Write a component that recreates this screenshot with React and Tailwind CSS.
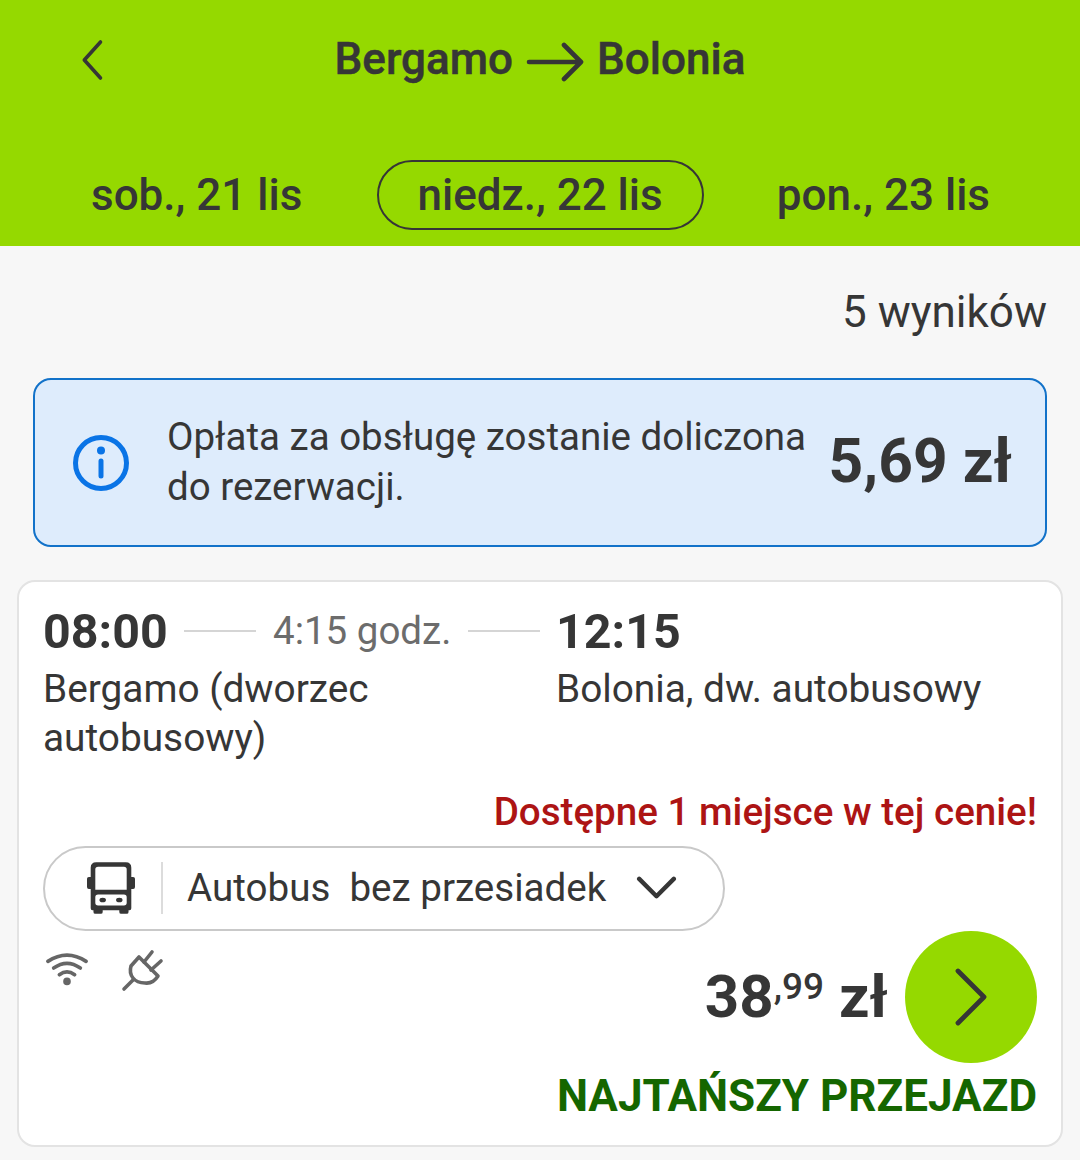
const dark = 'text-[#363636]';

function ChevronIcon({ d, className }) {
  return (
    <svg viewBox="0 0 40 48" fill="none" stroke="currentColor" strokeLinecap="round" strokeLinejoin="round" className={className}>
      <path d={d} />
    </svg>
  );
}

function Header() {
  return (
    <div className={`h-[246px] bg-[#95d900] ${dark} relative`}>
      <div className="absolute left-[78px] top-[36px] w-[36px] h-[48px]">
        <ChevronIcon d="M25 4 L7 24 L25 44" className="w-full h-full stroke-[4]" />
      </div>
      <div className="flex justify-center items-center h-[118px] text-[44px] font-medium leading-none [-webkit-text-stroke:0.5px_#363636]">
        <span>Bergamo</span>
        <svg viewBox="0 0 58 40" fill="none" stroke="currentColor" strokeLinecap="round" strokeLinejoin="round" className="w-[58px] h-[40px] mx-[13px] mt-[6px] stroke-[4.6]">
          <path d="M3 20 H54 M38 3 L55 20 L38 37" />
        </svg>
        <span>Bolonia</span>
      </div>
      <div className="flex items-center justify-between text-[44px] font-medium leading-none pl-[91px] pr-[90px] mt-[42px]">
        <span>sob., 21 lis</span>
        <span className="w-[327px] h-[70px] ml-[1px] flex items-center justify-center rounded-[35px] border-2 border-[#363636]">niedz., 22 lis</span>
        <span>pon., 23 lis</span>
      </div>
    </div>
  );
}

function InfoBox() {
  return (
    <div className="mx-[33px] mt-[44px] h-[169px] rounded-[18px] border-2 border-[#1272c9] bg-[#deecfc] flex items-center">
      <svg viewBox="0 0 56 56" fill="none" className="ml-[38px] w-[56px] h-[56px] shrink-0">
        <circle cx="28" cy="28" r="25.5" stroke="#0a74e6" strokeWidth="5" />
        <circle cx="28" cy="15.5" r="4" fill="#0a74e6" />
        <path d="M28 26 V41" stroke="#0a74e6" strokeWidth="5" strokeLinecap="round" />
      </svg>
      <p className={`ml-[38px] w-[650px] text-[38.5px] leading-[50px] mb-[2px] ${dark}`}>
        Opłata za obsługę zostanie doliczona do rezerwacji.
      </p>
      <span className={`ml-auto mr-[33px] text-[60.5px] font-bold leading-none ${dark}`}>5,69 zł</span>
    </div>
  );
}

function BusIcon() {
  return (
    <svg viewBox="0 0 52 58" className="w-[48px] h-[56px]">
      <path
        fillRule="evenodd"
        fill="#363636"
        d="M10 1 H42 Q48 1 48 7 V17 H50 Q52 17 52 19 V28 Q52 30 50 30 H48 V51 Q48 53 46 53 H45 V55 Q45 57 43 57 H37 Q35 57 35 55 V53 H17 V55 Q17 57 15 57 H9 Q7 57 7 55 V53 H6 Q4 53 4 51 V30 H2 Q0 30 0 28 V19 Q0 17 2 17 H4 V7 Q4 1 10 1 Z M12 6 Q9 6 9 9 V31 H43 V9 Q43 6 40 6 Z M12 36 Q9 36 9 39 V45 Q9 48 12 48 H40 Q43 48 43 45 V39 Q43 36 40 36 Z"
      />
      <ellipse cx="17" cy="42" rx="3.5" ry="2.5" fill="#363636" />
      <ellipse cx="35" cy="42" rx="3.5" ry="2.5" fill="#363636" />
    </svg>
  );
}

function AmenityIcons() {
  return (
    <div className="flex items-start gap-[33px] pt-[20px] pl-[3px]">
      <svg viewBox="0 0 44 36" fill="none" stroke="#666666" strokeWidth="3.8" strokeLinecap="round" className="w-[42px] h-[36px]">
        <path d="M2 10 Q22 -3 42 10" />
        <path d="M8 17 Q22 7 36 17" />
        <path d="M14 24 Q22 18 30 24" />
        <circle cx="22" cy="31" r="3" fill="#666666" strokeWidth="2" />
      </svg>
      <svg viewBox="0 0 44 44" fill="none" stroke="#666666" strokeWidth="3.6" strokeLinecap="round" strokeLinejoin="round" className="w-[44px] h-[44px] -mt-[3px]">
        <path d="M3 41 L12 32" />
        <path d="M18 9 L37 28 Q32 36 24 35 Q16 35 12 30 Q8 25 10 18 Z" />
        <path d="M23 14 L31 4 M30 22 L40 13" />
      </svg>
    </div>
  );
}

function ResultCard() {
  return (
    <div className="mx-[17px] mt-[33px] h-[567px] rounded-[18px] border-2 border-[#e3e3e3] bg-white px-[24px] pt-[22px] relative">
      <div className={`grid grid-cols-[513px_1fr] ${dark}`}>
        <div>
          <div className="flex items-center h-[56px]">
            <span className="text-[48.4px] font-bold leading-none w-[141px]">08:00</span>
            <span className="w-[72px] h-[2px] -mt-[2px] bg-[#d5d5d5]" />
            <span className="text-[38.5px] text-[#6c6c6c] leading-none ml-[17px] -mt-[2px]">4:15 godz.</span>
            <span className="w-[72px] h-[2px] -mt-[2px] bg-[#d5d5d5] ml-[17px]" />
          </div>
          <p className="text-[38.8px] leading-[49px] mt-[4px] w-[400px]">Bergamo (dworzec autobusowy)</p>
        </div>
        <div>
          <div className="flex items-center h-[56px] text-[48.4px] font-bold leading-none">12:15</div>
          <p className="text-[38.8px] leading-[49px] mt-[4px]">Bolonia, dw. autobusowy</p>
        </div>
      </div>
      <p className="text-[38.6px] font-medium leading-none text-[#ad1414] text-right mt-[31px]">
        Dostępne 1 miejsce w tej cenie!
      </p>
      <div className="flex justify-between items-start mt-[14px]">
        <div className="w-[682px]">
          <div className={`h-[85px] rounded-[43px] border-2 border-[#c9c9c9] flex items-center ${dark}`}>
            <div className="ml-[42px]"><BusIcon /></div>
            <span className="w-[2px] h-[52px] bg-[#dcdcdc] ml-[26px]" />
            <span className="text-[38.6px] leading-none ml-[24px] whitespace-pre">Autobus  bez przesiadek</span>
            <svg viewBox="0 0 42 26" fill="none" stroke="currentColor" strokeWidth="4.6" strokeLinecap="round" strokeLinejoin="round" className="w-[41px] h-[25px] ml-[30px]">
              <path d="M3 3 L21 21 L39 3" />
            </svg>
          </div>
          <AmenityIcons />
        </div>
      </div>
      <div className="absolute right-[24px] top-[349px] flex items-center">
        <div className={`flex items-start ${dark} font-bold text-[60px] leading-none mr-[17px]`}>
          <span>38</span>
          <span className="text-[37px] font-medium leading-none mt-[1px]">,99</span>
          <span className="ml-[15px]">zł</span>
        </div>
        <div className={`w-[132px] h-[132px] rounded-full bg-[#95d900] flex items-center justify-center ${dark}`}>
          <svg viewBox="0 0 36 60" fill="none" stroke="currentColor" strokeWidth="4.8" strokeLinecap="round" strokeLinejoin="round" className="w-[36px] h-[60px]">
            <path d="M5 4 L31 30 L5 56" />
          </svg>
        </div>
      </div>
      <p className="absolute right-[24px] top-[492px] text-[44px] font-bold leading-none text-[#156600] whitespace-nowrap">
        NAJTAŃSZY PRZEJAZD
      </p>
    </div>
  );
}

export default function App() {
  return (
    <div className="w-[1080px] h-[1160px] overflow-hidden bg-[#f7f7f7] font-['Roboto',sans-serif]">
      <Header />
      <p className={`text-[44px] leading-none text-right pr-[33px] mt-[44px] ${dark}`}>5 wyników</p>
      <InfoBox />
      <ResultCard />
    </div>
  );
}
